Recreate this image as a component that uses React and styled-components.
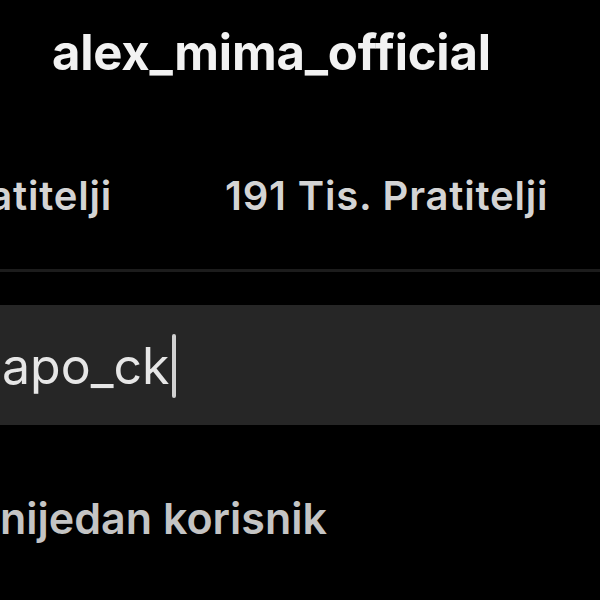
import React from 'react'
import styled, { createGlobalStyle } from 'styled-components'

const GlobalStyle = createGlobalStyle`
    html, body {
        margin: 0;
        padding: 0;
        background: #000;
    }
    body {
        font-family: Inter, "Liberation Sans", sans-serif;
        -webkit-font-smoothing: antialiased;
    }
`;

const Screen = styled.div`
    width: 600px;
    height: 600px;
    overflow: hidden;
    background: #000;
    display: flex;
    flex-direction: column;
`;

const Header = styled.div`
    height: 108px;
    display: flex;
    align-items: flex-start;
    padding-left: 52px;
    box-sizing: border-box;
    padding-top: 23px;
`;

const Title = styled.div`
    color: #f2f2f2;
    font-size: 49px;
    font-weight: 700;
    line-height: 60px;
    letter-spacing: -0.2px;
    white-space: nowrap;
`;

const Tabs = styled.div`
    display: grid;
    grid-template-columns: 112px 1fr;
    column-gap: 113px;
    height: 164px;
    align-items: center;
    border-bottom: 3px solid #1c1c1c;
    box-sizing: border-box;
    padding-top: 14px;
`;

const Tab = styled.div`
    display: flex;
    justify-content: ${p => (p.$clip ? 'flex-end' : 'flex-start')};
    color: #d4d4d4;
    font-size: 40px;
    font-weight: 600;
    line-height: 48px;
    letter-spacing: 0.8px;
    white-space: nowrap;
`;

const SearchBox = styled.div`
    margin-top: 33px;
    height: 120px;
    background: #262626;
    display: flex;
    align-items: center;
    padding-left: 2px;
    padding-top: 2px;
    box-sizing: border-box;
`;

const Query = styled.span`
    color: #e6e6e6;
    font-size: 50px;
    font-weight: 400;
    line-height: 60px;
`;

const Caret = styled.span`
    display: inline-block;
    width: 4px;
    height: 64px;
    margin-left: 3px;
    border-radius: 2px;
    background: #d0d0d0;
`;

const Empty = styled.div`
    margin-top: 65px;
    color: #c4c4c4;
    font-size: 43px;
    font-weight: 600;
    line-height: 56px;
    white-space: nowrap;
`;

export default function App() {
    return (
        <Screen>
            <GlobalStyle />
            <Header>
                <Title>alex_mima_official</Title>
            </Header>
            <Tabs>
                <Tab $clip>Pratitelji</Tab>
                <Tab>191 Tis. Pratitelji</Tab>
            </Tabs>
            <SearchBox>
                <Query>apo_ck</Query>
                <Caret />
            </SearchBox>
            <Empty>nijedan korisnik</Empty>
        </Screen>
    )
}
